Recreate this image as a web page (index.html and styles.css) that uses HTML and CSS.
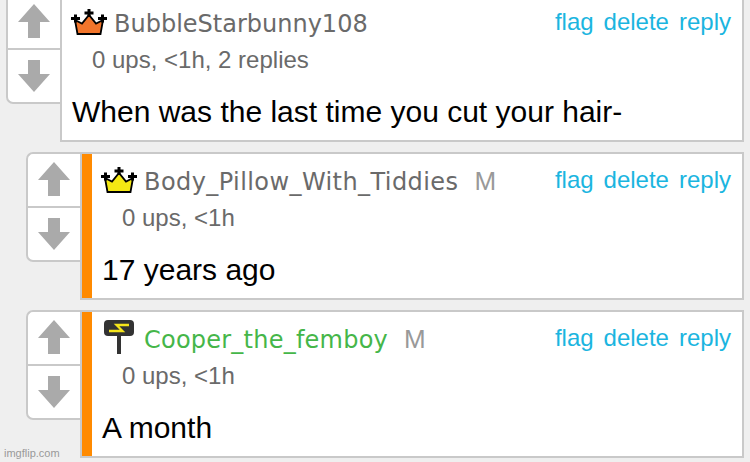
FILE: index.html
```
<!DOCTYPE html>
<html lang="en">
<head>
<meta charset="utf-8">
<title>Comments</title>
<link rel="stylesheet" href="styles.css">
</head>
<body>
<svg class="defs" width="0" height="0" aria-hidden="true">
  <symbol id="up" viewBox="0 0 32 34"><path d="M16 0 32 18H22V34H10V18H0Z"/></symbol>
  <symbol id="down" viewBox="0 0 32 32"><path d="M10 0H22V14H32L16 32 0 14H10Z"/></symbol>
  <symbol id="crown" viewBox="0 0 36 26">
    <path d="M4 11 11 14.500 18 6 25 14.500 32 11 29.500 25H6.500Z" stroke="#000" stroke-width="1.800"/>
    <path d="M18 0V8M13.500 4H22.500M4.500 5.500V13.500M0 9.500H9M31.500 5.500V13.500M27 9.500H36" stroke="#000" stroke-width="3" fill="none"/>
  </symbol>
</svg>
<main class="thread">
  <article class="comment">
    <div class="votes">
      <div class="vote"><svg class="up"><use href="#up"/></svg></div>
      <div class="vote"><svg class="down"><use href="#down"/></svg></div>
    </div>
    <section class="card">
      <header class="head">
        <svg class="crown orange"><use href="#crown"/></svg>
        <span class="name name-a">BubbleStarbunny108</span>
        <nav class="links"><a>flag</a><a>delete</a><a>reply</a></nav>
      </header>
      <div class="meta">0 ups, &lt;1h, 2 replies</div>
      <p class="text">When was the last time you cut your hair-</p>
    </section>
  </article>
  <article class="comment reply">
    <div class="votes">
      <div class="vote"><svg class="up"><use href="#up"/></svg></div>
      <div class="vote"><svg class="down"><use href="#down"/></svg></div>
    </div>
    <section class="card">
      <header class="head">
        <svg class="crown yellow"><use href="#crown"/></svg>
        <span class="name name-b">Body_Pillow_With_Tiddies</span><span class="mod">M</span>
        <nav class="links"><a>flag</a><a>delete</a><a>reply</a></nav>
      </header>
      <div class="meta">0 ups, &lt;1h</div>
      <p class="text">17 years ago</p>
    </section>
  </article>
  <article class="comment reply">
    <div class="votes">
      <div class="vote"><svg class="up"><use href="#up"/></svg></div>
      <div class="vote"><svg class="down"><use href="#down"/></svg></div>
    </div>
    <section class="card">
      <header class="head">
        <svg class="hammer" viewBox="0 0 36 34"><path d="M16 15h4v19h-4z" fill="#333"/><rect x="3" width="30" height="16" rx="4" fill="#333"/><path d="M28 5H15.500L21.500 11H8" stroke="#f5e51b" stroke-width="2.300" fill="none"/></svg>
        <span class="name name-c">Cooper_the_femboy</span><span class="mod">M</span>
        <nav class="links"><a>flag</a><a>delete</a><a>reply</a></nav>
      </header>
      <div class="meta">0 ups, &lt;1h</div>
      <p class="text">A month</p>
    </section>
  </article>
</main>
<div class="watermark">imgflip.com</div>
</body>
</html>
```
FILE: styles.css
```
* { box-sizing: border-box; }
body {
  margin: 0;
  height: 462px;
  overflow: hidden;
  background: #efefef;
  font-family: "Liberation Sans", Arial, sans-serif;
}
.defs { position: absolute; }
.thread {
  display: flex;
  flex-direction: column;
  gap: 10px;
  margin-top: -6px;
  padding: 0 6px;
}
.comment { display: flex; align-items: flex-start; height: 148px; }
.reply { margin-left: 20px; }
.votes {
  flex: none;
  width: 54px;
  height: 110px;
  border: 2px solid #c9c9c9;
  border-right: 0;
  border-radius: 7px 0 0 7px;
  background: #fff;
}
.vote { height: 52px; padding: 8px 0 0 10px; }
.vote + .vote { height: 54px; border-top: 2px solid #c9c9c9; padding-top: 10px; }
.vote svg { display: block; width: 32px; fill: #aaa; }
.up { height: 34px; }
.down { height: 32px; }
.card {
  flex: 1;
  height: 148px;
  border: 2px solid #c9c9c9;
  background: #fff;
  padding: 14px 11px 0 10px;
}
.reply .card { box-shadow: inset 10px 0 #ff8a00; padding-left: 20px; }
.head { display: flex; height: 28px; line-height: 28px; font-size: 24px; }
.head > svg { flex: none; width: 36px; margin: -1px 7px 0 -1px; }
.crown { height: 26px; }
.hammer { height: 34px; }
.head > .hammer { margin-top: -6px; }
.orange { fill: #f2752b; }
.yellow { fill: #f4e813; }
.name { font-family: Verdana, "DejaVu Sans", sans-serif; color: #6a6a6a; }
.name-b { letter-spacing: 0.42px; }
.name-c { color: #45b649; letter-spacing: 0.23px; }
.mod { margin: -1px 0 0 16px; font-size: 26px; color: #999; }
.links { display: flex; gap: 10px; margin: -2px 0 0 auto; color: #1bb5e0; }
.meta { margin: 8px 0 0 20px; height: 28px; line-height: 28px; font-size: 24px; color: #6a6a6a; }
.text { margin: 20px 0 0; line-height: 36px; font-size: 30px; color: #000; }
.watermark {
  position: absolute;
  left: 4px;
  bottom: 2px;
  font-size: 11px;
  line-height: 13px;
  color: #999;
}
```
